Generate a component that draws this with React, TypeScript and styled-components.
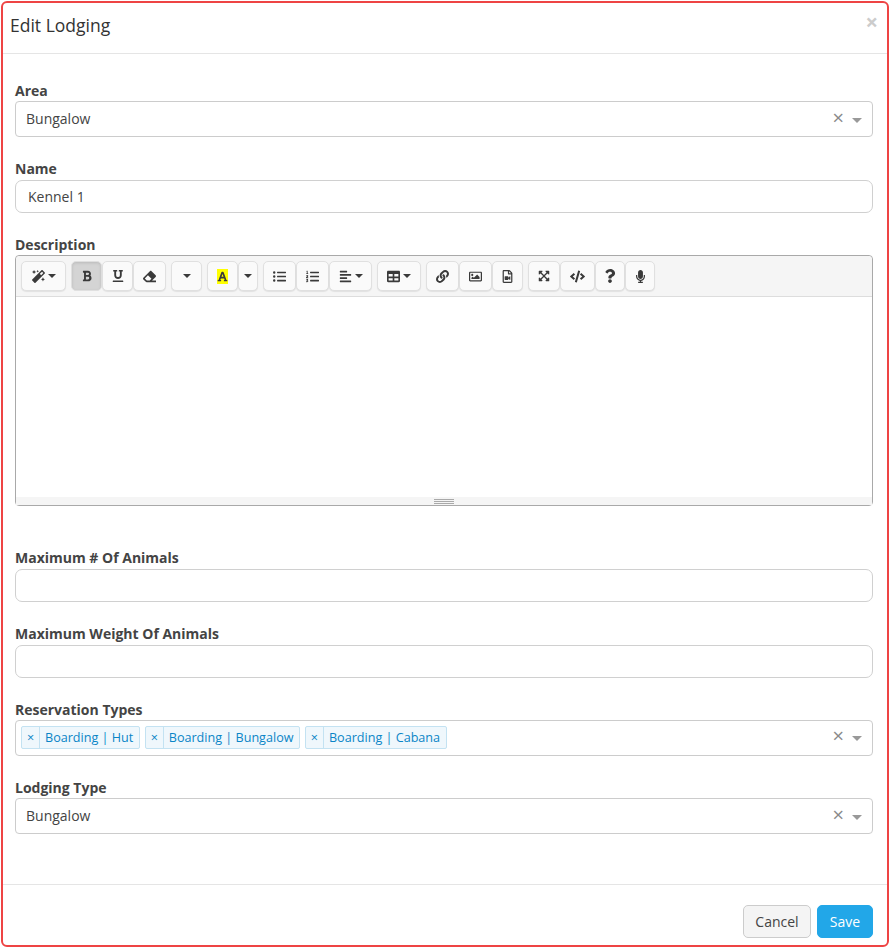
import React from 'react';
import styled, {createGlobalStyle} from 'styled-components';
import {
  FaAlignLeft,
  FaBold,
  FaCode,
  FaEraser,
  FaExpandArrowsAlt,
  FaFont,
  FaLink,
  FaListOl,
  FaListUl,
  FaMagic,
  FaMicrophone,
  FaQuestion,
  FaRegFileVideo,
  FaRegImage,
  FaTable,
  FaUnderline,
} from 'react-icons/fa';

const GlobalStyle = createGlobalStyle`
  html, body {
    margin: 0;
    padding: 0;
    background: #fff;
  }
  body {
    font-family: "Open Sans", "Liberation Sans", sans-serif;
    font-size: 14px;
    color: #444;
  }
  * {
    box-sizing: border-box;
  }
`;

const Modal = styled.div`
  display: flex;
  flex-direction: column;
  width: 888px;
  height: 946px;
  margin: 1px 0 0 1px;
  border: 2px solid #ee4444;
  border-radius: 6px;
  background: #fff;
`;

const Header = styled.header`
  display: flex;
  justify-content: space-between;
  height: 51px;
  padding: 0 9px 0 7px;
  border-bottom: 1px solid #e5e5e5;
`;

const Title = styled.h4`
  margin: 0;
  font-size: 17.5px;
  font-weight: 400;
  line-height: 45px;
  color: #333;
`;

const CloseButton = styled.span`
  font-size: 22px;
  font-weight: 700;
  line-height: 36px;
  color: #ccc;
`;

const Body = styled.div`
  flex: 1;
  padding: 27px 14px 0 12px;
`;

const Field = styled.div<{$gap?: number}>`
  margin-bottom: ${props => props.$gap ?? 22}px;
`;

const Label = styled.label<{$tight?: boolean}>`
  display: block;
  height: 20px;
  margin-bottom: ${props => (props.$tight ? 0 : 1)}px;
  font-weight: 700;
  line-height: 20px;
  color: #444;
`;

const TextInput = styled.div`
  height: 33px;
  padding: 0 12px;
  border: 1px solid #d0d0d0;
  border-radius: 7px;
  line-height: 31px;
  color: #444;
`;

const SelectBox = styled.div`
  display: flex;
  align-items: center;
  height: 36px;
  padding: 0 10px;
  border: 1px solid #ccc;
  border-radius: 4px;
  color: #444;
`;

const SelectValue = styled.div`
  flex: 1;
  display: flex;
  gap: 5px;
`;

const SelectClear = styled.span`
  margin-top: -3px;
  font-size: 20px;
  line-height: 1;
  color: #8a8a8a;
`;

const SelectCaret = styled.span`
  width: 0;
  height: 0;
  margin: 2px 0 0 8px;
  border-top: 5px solid #999;
  border-left: 5px solid transparent;
  border-right: 5px solid transparent;
`;

const SingleValue = styled.span`
  line-height: 34px;
`;

const SelectTags = styled(SelectBox)`
  padding: 0 10px 2px 5px;
`;

const Tag = styled.span`
  display: flex;
  height: 23px;
  border: 1px solid #c3e2f2;
  border-radius: 2px;
  background: #eff7fc;
  font-size: 12.6px;
  line-height: 21px;
  color: #0a85c7;
`;

const TagRemove = styled.span`
  width: 18px;
  border-right: 1px solid #c3e2f2;
  text-align: center;
`;

const TagLabel = styled.span`
  padding: 0 5.5px 0 5px;
`;

const Editor = styled.div`
  height: 251px;
  border: 1px solid #a9a9a9;
  border-radius: 4px;
  display: flex;
  flex-direction: column;
`;

const Toolbar = styled.div`
  display: flex;
  gap: 5px;
  height: 41px;
  padding: 5px 0 0 5px;
  background: #f5f5f5;
  border-bottom: 1px solid #ddd;
  border-radius: 4px 4px 0 0;
`;

const ToolGroup = styled.div`
  display: flex;
  height: 30px;
`;

const ToolButton = styled.div<{$width: number; $active?: boolean}>`
  display: flex;
  align-items: center;
  justify-content: center;
  gap: 3px;
  width: ${props => props.$width}px;
  height: 30px;
  border: 1px solid #e0e0e0;
  border-radius: 5px;
  background: ${props => (props.$active ? '#d4d4d4' : '#fafafa')};
  box-shadow: ${props =>
    props.$active ? 'inset 0 1px 3px rgba(0,0,0,.12)' : '0 1px 1px rgba(0,0,0,.08)'};
  color: #3a3a3a;
  font-size: 13px;
`;

const ToolCaret = styled.span`
  width: 0;
  height: 0;
  border-top: 4px solid #3a3a3a;
  border-left: 4px solid transparent;
  border-right: 4px solid transparent;
`;

const HighlightIcon = styled.span`
  display: flex;
  align-items: center;
  justify-content: center;
  width: 11px;
  height: 15px;
  background: #ffff00;
`;

const EditArea = styled.div`
  flex: 1;
  background: #fff;
`;

const StatusBar = styled.div`
  display: flex;
  flex-direction: column;
  align-items: center;
  justify-content: center;
  gap: 1px;
  height: 8px;
  background: #f5f5f5;
`;

const GripLine = styled.span`
  width: 20px;
  height: 1px;
  background: #a9a9a9;
`;

const Footer = styled.footer`
  display: flex;
  justify-content: flex-end;
  gap: 6px;
  height: 61px;
  padding: 20px 14px 0 0;
  border-top: 1px solid #e5e5e5;
`;

const Button = styled.button<{$primary?: boolean; $width: number}>`
  width: ${props => props.$width}px;
  height: 33px;
  padding: 0;
  border: 1px solid ${props => (props.$primary ? '#22a7e8' : '#ccc')};
  border-radius: 5px;
  background: ${props => (props.$primary ? '#22a7e8' : '#f4f4f4')};
  color: ${props => (props.$primary ? '#fff' : '#444')};
  font-family: inherit;
  font-size: 14px;
`;

const tags = ['Boarding | Hut', 'Boarding | Bungalow', 'Boarding | Cabana'];

const SingleSelect = ({value}: {value: string}) => (
  <SelectBox>
    <SelectValue>
      <SingleValue>{value}</SingleValue>
    </SelectValue>
    <SelectClear>×</SelectClear>
    <SelectCaret />
  </SelectBox>
);

type Tool = {
  width: number;
  icon?: React.ReactNode;
  caret?: boolean;
  active?: boolean;
};

const toolbarGroups: Tool[][] = [
  [{width: 45, icon: <FaMagic />, caret: true}],
  [
    {width: 31, icon: <FaBold size={12} />, active: true},
    {width: 31, icon: <FaUnderline size={12} />},
    {width: 33, icon: <FaEraser />},
  ],
  [{width: 31, caret: true}],
  [
    {
      width: 31,
      icon: (
        <HighlightIcon>
          <FaFont size={11} />
        </HighlightIcon>
      ),
    },
    {width: 20, caret: true},
  ],
  [
    {width: 33, icon: <FaListUl />},
    {width: 33, icon: <FaListOl />},
    {width: 43, icon: <FaAlignLeft />, caret: true},
  ],
  [{width: 44, icon: <FaTable />, caret: true}],
  [
    {width: 33, icon: <FaLink />},
    {width: 33, icon: <FaRegImage />},
    {width: 31, icon: <FaRegFileVideo />},
  ],
  [
    {width: 32, icon: <FaExpandArrowsAlt size={12} />},
    {width: 35, icon: <FaCode size={15} />},
    {width: 30, icon: <FaQuestion size={14} />},
    {width: 30, icon: <FaMicrophone size={13} />},
  ],
];

export default function App() {
  return (
    <>
      <GlobalStyle />
      <Modal>
        <Header>
          <Title>Edit Lodging</Title>
          <CloseButton>×</CloseButton>
        </Header>
        <Body>
          <Field>
            <Label $tight>Area</Label>
            <SingleSelect value="Bungalow" />
          </Field>
          <Field>
            <Label>Name</Label>
            <TextInput>Kennel 1</TextInput>
          </Field>
          <Field $gap={42}>
            <Label $tight>Description</Label>
            <Editor>
              <Toolbar>
                {toolbarGroups.map((group, i) => (
                  <ToolGroup key={i}>
                    {group.map((tool, j) => (
                      <ToolButton key={j} $width={tool.width} $active={tool.active}>
                        {tool.icon}
                        {tool.caret && <ToolCaret />}
                      </ToolButton>
                    ))}
                  </ToolGroup>
                ))}
              </Toolbar>
              <EditArea />
              <StatusBar>
                <GripLine />
                <GripLine />
                <GripLine />
              </StatusBar>
            </Editor>
          </Field>
          <Field>
            <Label>Maximum # Of Animals</Label>
            <TextInput />
          </Field>
          <Field>
            <Label>Maximum Weight Of Animals</Label>
            <TextInput />
          </Field>
          <Field>
            <Label $tight>Reservation Types</Label>
            <SelectTags>
              <SelectValue>
                {tags.map(tag => (
                  <Tag key={tag}>
                    <TagRemove>×</TagRemove>
                    <TagLabel>{tag}</TagLabel>
                  </Tag>
                ))}
              </SelectValue>
              <SelectClear>×</SelectClear>
              <SelectCaret />
            </SelectTags>
          </Field>
          <Field>
            <Label $tight>Lodging Type</Label>
            <SingleSelect value="Bungalow" />
          </Field>
        </Body>
        <Footer>
          <Button $width={68}>Cancel</Button>
          <Button $primary $width={56}>
            Save
          </Button>
        </Footer>
      </Modal>
    </>
  );
}
